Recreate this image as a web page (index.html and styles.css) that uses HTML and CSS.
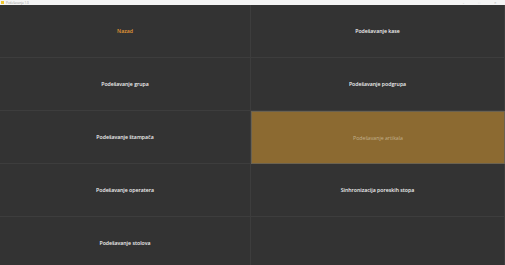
FILE: index.html
```html
<!DOCTYPE html>
<html lang="sr">
<head>
    <meta charset="utf-8">
    <title>Podešavanja</title>
    <link rel="stylesheet" href="styles.css">
</head>
<body>
    <div class="titlebar">
        <span class="app-icon"></span>
        <span class="app-title">Podešavanja 1.0</span>
        <span class="win-buttons">
            <span class="win-btn">–</span>
            <span class="win-btn">□</span>
            <span class="win-btn">✕</span>
        </span>
    </div>
    <div class="menu">
        <button class="tile back">Nazad</button>
        <button class="tile">Podešavanje kase</button>
        <button class="tile">Podešavanje grupa</button>
        <button class="tile">Podešavanje podgrupa</button>
        <button class="tile">Podešavanje štampača</button>
        <button class="tile active">Podešavanje artikala</button>
        <button class="tile">Podešavanje operatera</button>
        <button class="tile">Sinhronizacija poreskih stopa</button>
        <button class="tile">Podešavanje stolova</button>
        <button class="tile"></button>
    </div>
</body>
</html>
```

FILE: styles.css
```css
html, body {
    height: 100%;
}

body {
    margin: 0;
    padding: 0;
    font-family: "Open Sans", "Noto Sans", sans-serif;
    background-color: #333333;
    display: flex;
    flex-direction: column;
    overflow: hidden;
}

.titlebar {
    height: 5px;
    flex-shrink: 0;
    background-color: #f4f4f4;
    display: flex;
    align-items: center;
    gap: 2px;
    font-size: 3px;
    color: #9a9a9a;
    overflow: hidden;
}

.app-icon {
    width: 3px;
    height: 3px;
    background-color: #f0c830;
    margin-left: 1px;
}

.win-buttons {
    margin-left: auto;
    display: flex;
    gap: 14px;
    margin-right: 8px;
    font-size: 3px;
    color: #aaaaaa;
}

.menu {
    flex-shrink: 0;
    display: grid;
    grid-template-columns: 251px 1fr;
    grid-template-rows: repeat(5, 53px);
}

.tile {
    background-color: #333333;
    border: none;
    border-right: 1px solid #3d3d3d;
    border-bottom: 1px solid #3d3d3d;
    color: #f2f2f2;
    font-family: inherit;
    font-size: 5.2px;
    font-weight: 600;
    padding: 0;
    margin: 0;
    cursor: pointer;
}

.tile.back {
    color: #e59a35;
}

.tile.active {
    background-color: #8c6a31;
    color: #c2b08c;
    font-weight: 400;
    border: 1px solid #6b6250;
}
```
